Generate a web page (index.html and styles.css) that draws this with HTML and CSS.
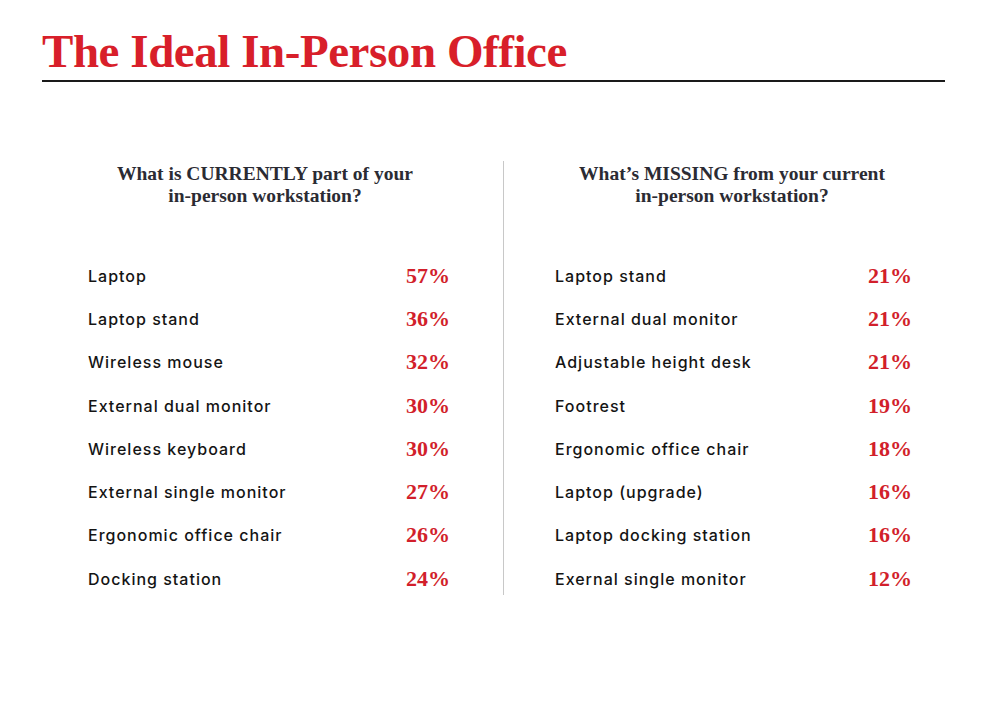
FILE: index.html
```html
<!DOCTYPE html>
<html lang="en">
<head>
<meta charset="utf-8">
<title>The Ideal In-Person Office</title>
<link rel="stylesheet" href="styles.css">
</head>
<body>
<div class="page">
  <header class="header">
    <h1 class="title">The Ideal In-Person Office</h1>
  </header>
  <main class="columns">
    <section class="col">
      <h2 class="col-title">What is CURRENTLY part of your<br>in-person workstation?</h2>
      <ul class="list">
        <li class="row"><span class="label">Laptop</span><span class="pct">57%</span></li>
        <li class="row"><span class="label">Laptop stand</span><span class="pct">36%</span></li>
        <li class="row"><span class="label">Wireless mouse</span><span class="pct">32%</span></li>
        <li class="row"><span class="label">External dual monitor</span><span class="pct">30%</span></li>
        <li class="row"><span class="label">Wireless keyboard</span><span class="pct">30%</span></li>
        <li class="row"><span class="label">External single monitor</span><span class="pct">27%</span></li>
        <li class="row"><span class="label">Ergonomic office chair</span><span class="pct">26%</span></li>
        <li class="row"><span class="label">Docking station</span><span class="pct">24%</span></li>
      </ul>
    </section>
    <div class="divider"></div>
    <section class="col col-right">
      <h2 class="col-title">What’s MISSING from your current<br>in-person workstation?</h2>
      <ul class="list">
        <li class="row"><span class="label">Laptop stand</span><span class="pct">21%</span></li>
        <li class="row"><span class="label">External dual monitor</span><span class="pct">21%</span></li>
        <li class="row"><span class="label">Adjustable height desk</span><span class="pct">21%</span></li>
        <li class="row"><span class="label">Footrest</span><span class="pct">19%</span></li>
        <li class="row"><span class="label">Ergonomic office chair</span><span class="pct">18%</span></li>
        <li class="row"><span class="label">Laptop (upgrade)</span><span class="pct">16%</span></li>
        <li class="row"><span class="label">Laptop docking station</span><span class="pct">16%</span></li>
        <li class="row"><span class="label">Exernal single monitor</span><span class="pct">12%</span></li>
      </ul>
    </section>
  </main>
</div>
</body>
</html>
```
FILE: styles.css
```css
* { box-sizing: border-box; }
html, body { margin: 0; padding: 0; background: #ffffff; }
.page { width: 1001px; height: 701px; }
.header { margin: 0 56px 0 42px; padding-top: 29px; border-bottom: 2px solid #1a1a1a; }
.title {
  margin: 0; padding-bottom: 7px;
  font-family: "Liberation Serif", "DejaVu Serif", serif;
  font-weight: 700; font-size: 47px; line-height: 44px;
  color: #d81f2a; letter-spacing: -0.45px;
}
.columns { display: flex; padding: 79px 0 0 88px; }
.col { width: 362px; }
.col-right { width: 357px; }
.divider { width: 1px; background: #c8c8c8; margin: 0 51px 0 53px; height: 434px; }
.col-title {
  margin: 0 8px 0 0; text-align: center;
  font-family: "Liberation Serif", "DejaVu Serif", serif;
  font-weight: 700; font-size: 19.5px; line-height: 22px;
  color: #2b2b33;
  padding-top: 2px;
}
.col-right .col-title { margin-right: 3px; }
.list { list-style: none; margin: 47px 0 0; padding: 0; }
.row { display: flex; justify-content: space-between; align-items: center; height: 43.3px; }
.label {
  font-family: "Inter", "Open Sans", sans-serif; font-weight: 500;
  font-size: 16px; letter-spacing: 1px; color: #141414;
}
.pct {
  font-family: "Liberation Serif", "DejaVu Serif", serif; font-weight: 700;
  font-size: 22px; color: #d21f2b;
}
```
